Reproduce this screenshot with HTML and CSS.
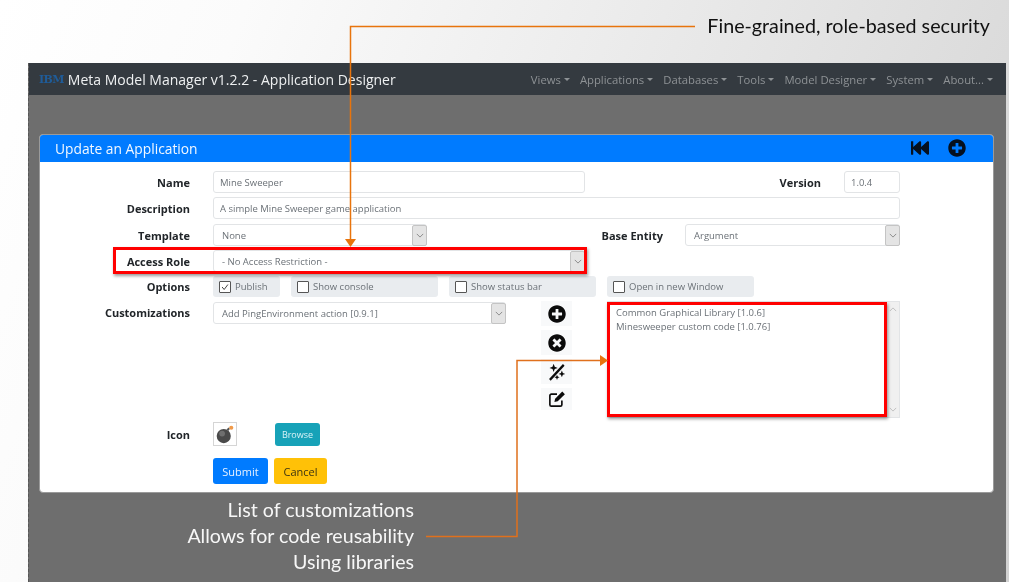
FILE: index.html
```html
<!DOCTYPE html>
<html lang="en">
<head>
<meta charset="utf-8">
<title>Application Designer</title>
<link rel="stylesheet" href="styles.css">
</head>
<body>
<div class="slide">
  <header class="slide-top"><p class="top-caption">Fine-grained, role-based security</p></header>
  <main class="window">
    <nav class="navbar">
      <div class="brand"><span class="logo">IBM</span><span class="brand-title">Meta Model Manager v1.2.2 - Application Designer</span></div>
      <ul class="menu">
        <li class="menu-item">Views</li>
        <li class="menu-item">Applications</li>
        <li class="menu-item">Databases</li>
        <li class="menu-item">Tools</li>
        <li class="menu-item">Model Designer</li>
        <li class="menu-item">System</li>
        <li class="menu-item">About...</li>
      </ul>
    </nav>
    <section class="card">
      <div class="card-header">
        <h1 class="card-title">Update an Application</h1>
        <div class="header-icons">
          <svg class="hicon hicon-back" viewBox="0 0 512 512"><path d="M0 436V76c0-6.6 5.4-12 12-12h40c6.6 0 12 5.4 12 12v151.9L235.5 71.4C256.1 54.3 288 68.6 288 96v131.9L459.5 71.4C480.1 54.3 512 68.6 512 96v320c0 27.4-31.9 41.7-52.5 24.6L288 285.3V416c0 27.4-31.9 41.7-52.5 24.6L64 285.3V436c0 6.6-5.4 12-12 12H12c-6.6 0-12-5.4-12-12z"/></svg>
          <svg class="hicon" viewBox="0 0 512 512"><path d="M256 8C119 8 8 119 8 256s111 248 248 248 248-111 248-248S393 8 256 8zm144 276c0 6.6-5.4 12-12 12h-92v92c0 6.6-5.4 12-12 12h-56c-6.6 0-12-5.4-12-12v-92h-92c-6.6 0-12-5.4-12-12v-56c0-6.6 5.4-12 12-12h92v-92c0-6.6 5.4-12 12-12h56c6.6 0 12 5.4 12 12v92h92c6.6 0 12 5.4 12 12v56z"/></svg>
        </div>
      </div>
      <form class="card-body">
        <div class="row">
          <span class="label">Name</span>
          <div class="field w-name">Mine Sweeper</div>
          <span class="label label-version">Version</span>
          <div class="field w-version">1.0.4</div>
        </div>
        <div class="row row-wide">
          <span class="label">Description</span>
          <div class="field w-desc">A simple Mine Sweeper game application</div>
        </div>
        <div class="row">
          <span class="label">Template</span>
          <div class="select w-template"><span class="select-text">None</span><span class="select-btn"><svg class="chev" viewBox="0 0 10 6"><path d="M1 1l4 4 4-4"/></svg></span></div>
          <span class="label label-entity">Base Entity</span>
          <div class="select w-entity"><span class="select-text">Argument</span><span class="select-btn"><svg class="chev" viewBox="0 0 10 6"><path d="M1 1l4 4 4-4"/></svg></span></div>
        </div>
        <div class="row">
          <span class="label">Access Role</span>
          <div class="select w-name"><span class="select-text">- No Access Restriction -</span><span class="select-btn"><svg class="chev" viewBox="0 0 10 6"><path d="M1 1l4 4 4-4"/></svg></span></div>
        </div>
        <div class="row row-options">
          <span class="label">Options</span>
          <div class="options">
            <div class="option w-publish"><span class="check"><svg viewBox="0 0 12 12"><path d="M2.5 6l2.5 3 4.5-6"/></svg></span>Publish</div>
            <div class="option w-opt"><span class="check"></span>Show console</div>
            <div class="option w-opt"><span class="check"></span>Show status bar</div>
            <div class="option w-opt"><span class="check"></span>Open in new Window</div>
          </div>
        </div>
        <div class="custom">
          <span class="label label-custom">Customizations</span>
          <div class="select w-custom"><span class="select-text">Add PingEnvironment action [0.9.1]</span><span class="select-btn"><svg class="chev" viewBox="0 0 10 6"><path d="M1 1l4 4 4-4"/></svg></span></div>
          <div class="tools">
            <div class="tool"><svg class="ticon" viewBox="0 0 512 512"><path d="M256 8C119 8 8 119 8 256s111 248 248 248 248-111 248-248S393 8 256 8zm144 276c0 6.6-5.4 12-12 12h-92v92c0 6.6-5.4 12-12 12h-56c-6.6 0-12-5.4-12-12v-92h-92c-6.6 0-12-5.4-12-12v-56c0-6.6 5.4-12 12-12h92v-92c0-6.6 5.4-12 12-12h56c6.6 0 12 5.4 12 12v92h92c6.6 0 12 5.4 12 12v56z"/></svg></div>
            <div class="tool"><svg class="ticon" viewBox="0 0 512 512"><path d="M256 8C119 8 8 119 8 256s111 248 248 248 248-111 248-248S393 8 256 8zm121.6 313.1c4.7 4.7 4.7 12.3 0 17L338 377.6c-4.7 4.7-12.3 4.7-17 0L256 312l-65.1 65.6c-4.7 4.7-12.3 4.7-17 0L134.4 338c-4.7-4.7-4.7-12.3 0-17l65.6-65-65.6-65.1c-4.7-4.7-4.7-12.3 0-17l39.6-39.6c4.7-4.7 12.3-4.7 17 0l65 65.7 65.1-65.6c4.7-4.7 12.3-4.7 17 0l39.6 39.6c4.7 4.7 4.7 12.3 0 17L312 256l65.6 65.1z"/></svg></div>
            <div class="tool"><svg class="ticon" viewBox="0 0 24 24"><path class="wand" d="M2.5 22.500L21 2.500"/><path d="M7.500 1l1.500 4 4 1.500-4 1.500-1.500 4-1.500-4-4-1.500 4-1.500zM18.500 10l1.300 3.200 3.200 1.300-3.200 1.300-1.300 3.200-1.300-3.200-3.200-1.300 3.200-1.300zM12 15.500l1 2.500 2.500 1-2.500 1-1 2.500-1-2.500-2.500-1 2.500-1z"/></svg></div>
            <div class="tool tool-last"><svg class="ticon" viewBox="0 0 24 24"><path class="pen-box" d="M18.500 14v5.500a2 2 0 0 1-2 2H4.500a2 2 0 0 1-2-2V7.500a2 2 0 0 1 2-2H12"/><path d="M9.500 11.500L19 2l3.500 3.500L13 15l-4.500 1z"/></svg></div>
          </div>
          <div class="listbox">
            <div class="list-items">
              <div class="list-item">Common Graphical Library [1.0.6]</div>
              <div class="list-item">Minesweeper custom code [1.0.76]</div>
            </div>
            <div class="scrollbar">
              <svg class="chev chev-up" viewBox="0 0 10 6"><path d="M1 5l4-4 4 4"/></svg>
              <svg class="chev" viewBox="0 0 10 6"><path d="M1 1l4 4 4-4"/></svg>
            </div>
          </div>
        </div>
        <div class="row-icon">
          <span class="label">Icon</span>
          <div class="thumb">
            <svg viewBox="0 0 24 24" class="bomb">
              <circle cx="10.500" cy="14.500" r="8.500" fill="#4a4a4a"/>
              <circle cx="8.500" cy="11.500" r="3.500" fill="#6f6f6f"/>
              <path d="M15 7.500l2-2.500" stroke="#555" stroke-width="2.500" fill="none"/>
              <circle cx="19.500" cy="4.500" r="2.500" fill="#f09a4a"/>
            </svg>
          </div>
          <div class="btn btn-browse">Browse</div>
        </div>
        <div class="row-actions">
          <div class="btn btn-submit">Submit</div>
          <div class="btn btn-cancel">Cancel</div>
        </div>
      </form>
    </section>
    <div class="bottom-caption">
      <p class="cap-line">List of customizations</p>
      <p class="cap-line">Allows for code reusability</p>
      <p class="cap-line">Using libraries</p>
    </div>
  </main>

  <div class="highlight highlight-role"></div>
  <div class="highlight highlight-list"></div>
  <svg class="callouts" viewBox="0 0 1009 582">
    <path class="line line-top" d="M695 26.500H350.500V240"/>
    <path class="head-top" d="M345 239h11l-5.500 8z"/>
    <path class="line line-low" d="M426 536.500H517V360.500H601"/>
    <path class="head-low" d="M600 355v11l8-5.500z"/>
  </svg>
</div>
</body>
</html>
```

FILE: styles.css
```css
* { box-sizing: border-box; }
html, body { margin: 0; height: 100%; overflow: hidden; }
body { font-family: "Open Sans", "Noto Sans", sans-serif; }
p, h1, ul { margin: 0; padding: 0; }

.slide {
  position: relative;
  width: 1009px;
  height: 582px;
  overflow: hidden;
  padding: 0 3px 0 28px;
  display: flex;
  flex-direction: column;
  background: linear-gradient(112deg, #ffffff 0%, #fbfbfb 20%, #ececec 50%, #d2d2d2 100%);
}
.slide-top {
  height: 63px;
  flex: none;
  display: flex;
  justify-content: flex-end;
  padding: 12px 16px 0 0;
}
.top-caption { font-family: Lato, "Open Sans", sans-serif; font-size: 19.700px; line-height: 28px; color: #111; filter: blur(0.25px); }

.window {
  flex: 1;
  display: flex;
  flex-direction: column;
  background: #6e6e6e;
  border-left: 1px dashed #565656;
  filter: blur(0.35px);
}
.navbar {
  height: 32px;
  flex: none;
  background: #343a40;
  display: flex;
  align-items: center;
  justify-content: space-between;
  padding: 0 13px 0 10px;
}
.brand { display: flex; align-items: center; gap: 4px; }
.logo { font-family: "DejaVu Serif", serif; font-weight: 700; font-size: 11px; letter-spacing: -0.6px; color: #1f5c99; }
.brand-title { font-size: 14px; color: #eef0f1; white-space: nowrap; }
.menu { list-style: none; display: flex; gap: 10px; }
.menu-item { font-size: 11.300px; color: #8e9295; display: flex; align-items: center; gap: 3px; white-space: nowrap; }
.menu-item::after {
  content: "";
  border-top: 3px solid #8e9295;
  border-left: 3px solid transparent;
  border-right: 3px solid transparent;
}

.card {
  flex: none;
  margin: 39px 12px 0 10px;
  height: 359px;
  background: #fff;
  border: 1px solid #9a9a9a;
  border-radius: 4px;
  overflow: hidden;
  display: flex;
  flex-direction: column;
}
.card-header {
  height: 27px;
  flex: none;
  background: #007bff;
  display: flex;
  align-items: center;
  justify-content: space-between;
  padding: 0 27px 1px 15px;
}
.card-title { font-size: 13.800px; font-weight: 400; color: #f2f8ff; }
.header-icons { display: flex; align-items: center; gap: 19px; }
.hicon { width: 18px; height: 18px; fill: #05101f; display: block; }

.card-body { padding: 9px 0 0 0; display: flex; flex-direction: column; }
.row { display: flex; align-items: center; height: 22px; margin-bottom: 4px; }
.row-wide { margin-bottom: 5px; }
.row-options { height: 21px; }
.label {
  width: 150px;
  flex: none;
  text-align: right;
  font-size: 11px;
  font-weight: 700;
  color: #212529;
  margin-right: 23px;
}
.label-version { width: 236px; }
.label-entity { width: 236px; margin-right: 22px; }
.field, .select {
  height: 22px;
  border: 1px solid #e2e4e6;
  border-radius: 3px;
  background: #fff;
  font-size: 9.500px;
  color: #6b7177;
  display: flex;
  align-items: center;
  white-space: nowrap;
}
.field { padding-left: 6px; }
.w-name { width: 372px; }
.w-version { width: 56px; }
.w-desc { width: 687px; }
.w-template { width: 214px; }
.w-entity { width: 215px; }
.w-custom { width: 293px; flex: none; }
.select { justify-content: space-between; padding-left: 8px; }
.select-btn {
  width: 15px;
  height: 21px;
  margin-right: -1px;
  background: #e4e4e4;
  border: 1px solid #c4c4c4;
  border-radius: 2px;
  display: flex;
  align-items: center;
  justify-content: center;
}
.chev { width: 8px; height: 5px; fill: none; stroke: #777; stroke-width: 1; display: block; }

.options { display: flex; gap: 11px; }
.option {
  height: 21px;
  background: #e9ecef;
  border-radius: 3px;
  font-size: 9.500px;
  color: #6b7177;
  display: flex;
  align-items: center;
  gap: 4px;
  padding-left: 6px;
  white-space: nowrap;
}
.w-publish { width: 67px; }
.w-opt { width: 147px; }
.check { width: 12px; height: 12px; flex: none; background: #fff; border: 1px solid #555; border-radius: 1px; display: block; }
.check svg { width: 10px; height: 10px; fill: none; stroke: #444; stroke-width: 1.200; display: block; }

.custom { display: flex; align-items: flex-start; height: 117px; margin-bottom: 4px; }
.label-custom { padding-top: 4px; }
.w-custom { margin-top: 1px; margin-right: 35px; }
.tools { width: 31px; flex: none; margin-right: 35px; display: flex; flex-direction: column; gap: 4px; }
.tool { height: 25px; background: #f8f9fa; display: flex; align-items: center; justify-content: center; }
.tool-last { height: 22px; }
.ticon { width: 18px; height: 18px; fill: #0b0b0b; display: block; }
.wand { stroke: #0b0b0b; stroke-width: 3; fill: none; }
.pen-box { stroke: #0b0b0b; stroke-width: 2.200; fill: none; }
.listbox { width: 293px; height: 117px; flex: none; display: flex; border: 1px solid #e2e4e6; background: #fff; }
.list-items { flex: 1; padding: 4px 0 0 8px; }
.list-item { font-size: 9.500px; line-height: 14px; color: #6b7177; white-space: nowrap; }
.scrollbar { width: 13px; flex: none; background: #f0f0f0; display: flex; flex-direction: column; justify-content: space-between; align-items: center; padding: 5px 0; }
.scrollbar .chev { stroke: #b5b5b5; }

.row-icon { display: flex; align-items: center; height: 24px; margin-bottom: 12px; }
.thumb { width: 24px; height: 24px; border: 1px solid #d5d5d5; background: #fff; margin-right: 38px; display: flex; align-items: center; justify-content: center; }
.bomb { width: 20px; height: 20px; display: block; }
.btn { display: flex; align-items: center; justify-content: center; border-radius: 3px; font-size: 10px; white-space: nowrap; }
.btn-browse { width: 45px; height: 23px; background: #17a2b8; color: #d8f2f6; font-size: 9px; }
.row-actions { display: flex; gap: 6px; padding-left: 173px; }
.btn-submit { width: 55px; height: 26px; background: #007bff; color: #e6f1ff; font-size: 11px; }
.btn-cancel { width: 53px; height: 26px; background: #ffc107; color: #3b3413; font-size: 11px; }

.bottom-caption { width: 385px; margin-top: 4px; text-align: right; }
.cap-line { font-family: Lato, "Open Sans", sans-serif; font-size: 19.600px; line-height: 26px; color: #f7f7f7; white-space: nowrap; }

.highlight { position: absolute; border: 3px solid #ff0000; box-shadow: 1px 2px 3px rgba(0,0,0,.4); pointer-events: none; }
.highlight-role { left: 113px; top: 247px; width: 474px; height: 27px; }
.highlight-list { left: 607px; top: 302px; width: 280px; height: 115px; }
.callouts { position: absolute; left: 0; top: 0; width: 1009px; height: 582px; pointer-events: none; }
.line { fill: none; stroke-width: 1.500; }
.line-top { stroke: #e8740c; }
.head-top { fill: #e8740c; }
.line-low { stroke: #e0701c; }
.head-low { fill: #e8740c; }
```
